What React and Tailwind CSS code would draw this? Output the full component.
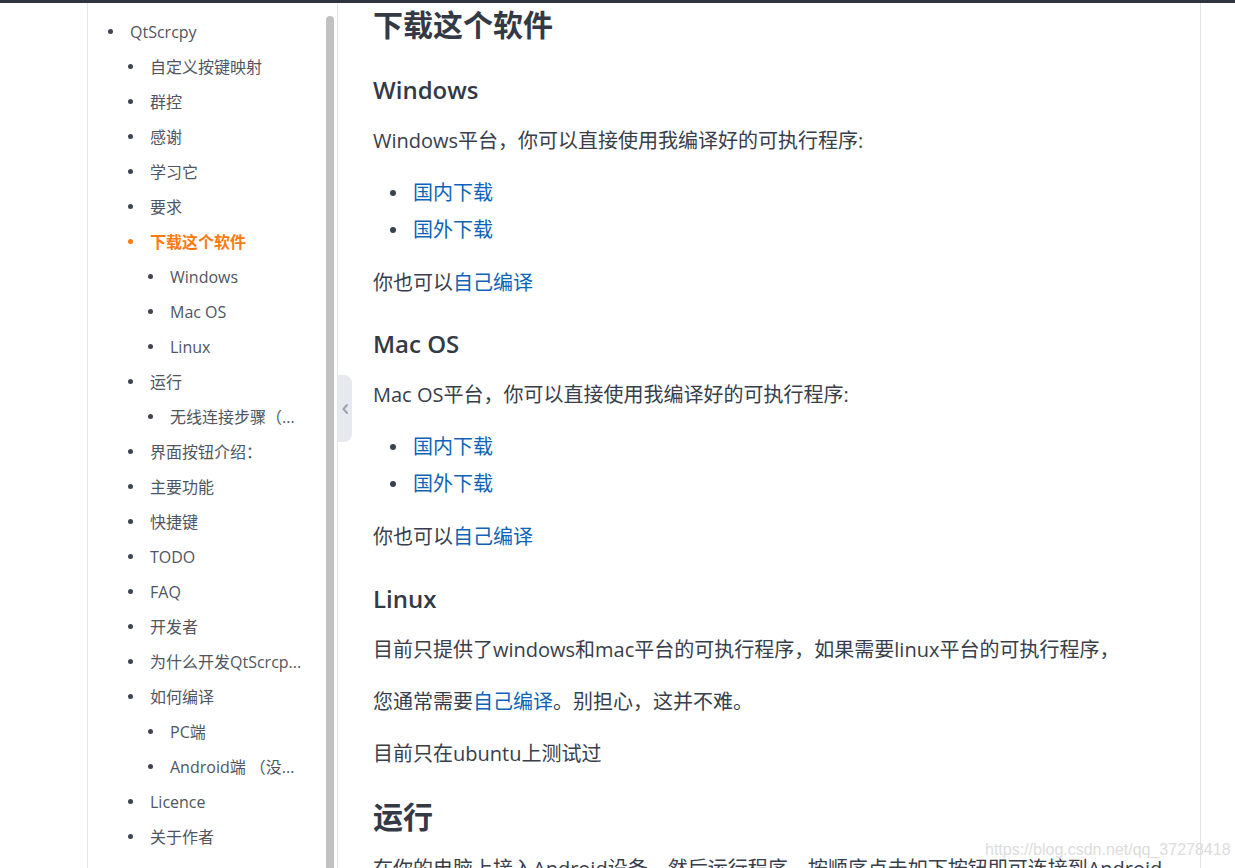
import React from "react";

const nav = [
  { t: "QtScrcpy", l: 1 },
  { t: "自定义按键映射", l: 2 },
  { t: "群控", l: 2 },
  { t: "感谢", l: 2 },
  { t: "学习它", l: 2 },
  { t: "要求", l: 2 },
  { t: "下载这个软件", l: 2, active: true },
  { t: "Windows", l: 3 },
  { t: "Mac OS", l: 3 },
  { t: "Linux", l: 3 },
  { t: "运行", l: 2 },
  { t: "无线连接步骤（...", l: 3 },
  { t: "界面按钮介绍：", l: 2 },
  { t: "主要功能", l: 2 },
  { t: "快捷键", l: 2 },
  { t: "TODO", l: 2 },
  { t: "FAQ", l: 2 },
  { t: "开发者", l: 2 },
  { t: "为什么开发QtScrcp...", l: 2 },
  { t: "如何编译", l: 2 },
  { t: "PC端", l: 3 },
  { t: "Android端 （没...", l: 3 },
  { t: "Licence", l: 2 },
  { t: "关于作者", l: 2 },
];

const padFor = { 1: "pl-[20px]", 2: "pl-[40px]", 3: "pl-[60px]" };

function NavItem({ item }) {
  return (
    <div className={`flex items-center h-[35px] ${padFor[item.l]}`}>
      <span
        className={`w-[5px] h-[5px] rounded-full shrink-0 ${
          item.active ? "bg-[#ff7a0f]" : "bg-[#3e4452]"
        }`}
      />
      <span
        className={`ml-[17px] text-[16px] whitespace-nowrap ${
          item.active ? "text-[#ff7a0f] font-bold" : "text-[#4f5561]"
        }`}
      >
        {item.t}
      </span>
    </div>
  );
}

const A = ({ children }) => <span className="text-[#0d63b8]">{children}</span>;

function Li({ children, first }) {
  return (
    <div className={`flex items-center h-[32px] pl-[17px] ${first ? "mt-[20px]" : "mt-[5px]"}`}>
      <span className="w-[6px] h-[6px] rounded-full bg-[#3a4150] shrink-0" />
      <span className="ml-[17px]">{children}</span>
    </div>
  );
}

function Section({ title, plat }) {
  return (
    <>
      <h2 className="mt-[27px] h-[36px] leading-[36px] text-[24px] font-semibold text-[#333a46]">{title}</h2>
      <p className="mt-[17px] h-[32px] leading-[32px]">{plat}平台，你可以直接使用我编译好的可执行程序:</p>
      <Li first><A>国内下载</A></Li>
      <Li><A>国外下载</A></Li>
      <p className="mt-[21px] h-[32px] leading-[32px]">
        你也可以<A>自己编译</A>
      </p>
    </>
  );
}

export default function App() {
  return (
    <div className="relative w-[1235px] h-[868px] overflow-hidden bg-white flex flex-col font-['Open_Sans','Noto_Sans_CJK_SC',sans-serif]">
      <div className="h-[3px] bg-[#2f3441] shrink-0" />
      <div className="flex flex-1 min-h-0">
        <div className="w-[87px] shrink-0" />
        <aside className="w-[251px] shrink-0 flex border-l border-r border-[#e4e7eb]">
          <nav className="flex-1 pt-[11px] overflow-hidden">
            {nav.map((it, i) => (
              <NavItem key={i} item={it} />
            ))}
          </nav>
          <div className="w-[8px] mt-[13px] bg-[#c1c1c1] rounded-t-[4px] shrink-0" />
          <div className="w-[3px] shrink-0" />
        </aside>
        <main className="w-[863px] shrink-0 border-r border-[#e3e3e3] pl-[35px] text-[20px] text-[#383e4a]">
          <h1 className="mt-[2px] h-[40px] leading-[40px] text-[30px] font-bold text-[#333a46]">下载这个软件</h1>
          <Section title="Windows" plat="Windows" />
          <Section title="Mac OS" plat="Mac OS" />
          <h2 className="mt-[28px] h-[36px] leading-[36px] text-[24px] font-semibold text-[#333a46]">Linux</h2>
          <p className="mt-[17px] h-[32px] leading-[32px] whitespace-nowrap">
            目前只提供了windows和mac平台的可执行程序，如果需要linux平台的可执行程序，
          </p>
          <p className="mt-[20px] h-[32px] leading-[32px]">
            您通常需要<A>自己编译</A>。别担心，这并不难。
          </p>
          <p className="mt-[20px] h-[32px] leading-[32px]">目前只在ubuntu上测试过</p>
          <h1 className="mt-[27px] h-[40px] leading-[40px] text-[30px] font-bold text-[#333a46]">运行</h1>
          <p className="mt-[16px] h-[32px] leading-[32px] whitespace-nowrap">
            在你的电脑上接入Android设备，然后运行程序，按顺序点击如下按钮即可连接到Android
          </p>
        </main>
      </div>
      <div className="absolute left-[338px] top-[375px] w-[14px] h-[67px] bg-[#e6e9ee] rounded-r-[8px] flex items-center justify-center">
        <svg width="8" height="12" viewBox="0 0 8 12" fill="none">
          <path d="M6 2 L2.5 6 L6 10" stroke="#9ca2ab" strokeWidth="2" strokeLinecap="round" strokeLinejoin="round" />
        </svg>
      </div>
      <div className="absolute left-[985px] top-[840px] text-[16px] leading-[20px] text-[#dcdcdc] font-['Liberation_Sans',sans-serif] whitespace-nowrap">
        https://blog.csdn.net/qq_37278418
      </div>
    </div>
  );
}
